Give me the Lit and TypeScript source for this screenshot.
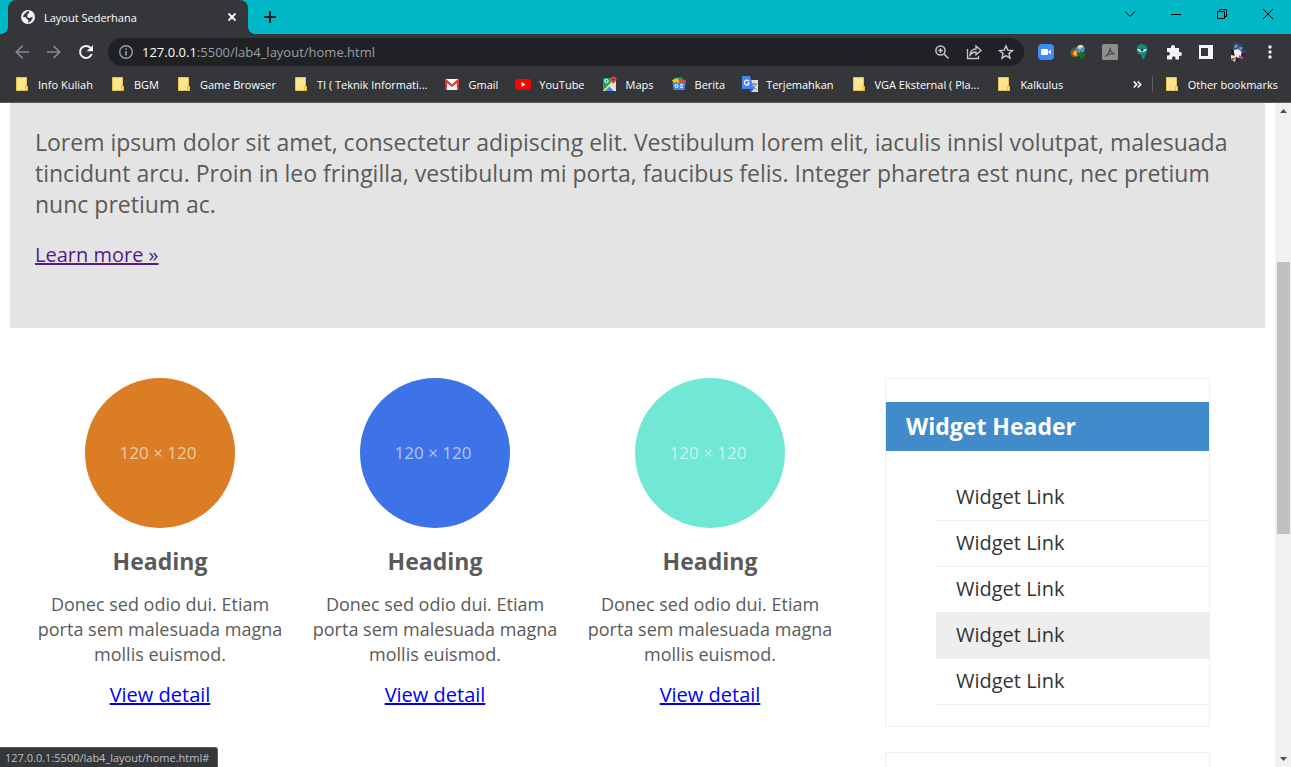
import { LitElement, html, css, svg } from "lit";
import { customElement } from "lit/decorators.js";

const folder = svg`<path d="M2.500 1.500h10v9h1v4h-11z" fill="#ffe591" stroke="#e8c14a"/><path d="M11.500 10.500h2v4h-2z" fill="#ffe591" stroke="#e8b931"/>`;
const gmail = svg`<path d="M1 3h14v11H1z" fill="#f2f2f2"/><path d="M1 14V3l7 6 7-6v11h-2V7L8 11 3 7v7z" fill="#d93a2f"/><path d="M2 3h12L8 8z" fill="#fff"/><path d="M1 3l7 6 7-6" fill="none" stroke="#e04a3f" stroke-width="1.500"/>`;
const youtube = svg`<rect x="0" y="3" width="16" height="11" rx="3" fill="#f00"/><path d="M6.500 6v5l4-2.500z" fill="#fff"/>`;
const maps = svg`<path d="M1 2h13v13H1z" fill="#1fa463"/><path d="M1 15L13 3l1 2v10z" fill="#f1f1f1"/><path d="M2 15l5-5 5 5z" fill="#4285f4"/><path d="M1 15L11 4l1 2-9 9z" fill="#fdd663"/><path d="M9 9l5 6V9z" fill="#dadce0"/><circle cx="4.500" cy="5" r="1.700" fill="none" stroke="#fff"/><path d="M11.500 9c0-3-3-3-3-5.500a3 3 0 0 1 6 0c0 2.500-3 2.500-3 5.500z" fill="#db4437"/><circle cx="11.500" cy="3.500" r="1" fill="#7b231b"/>`;
const news = svg`<path d="M3 2l8-1 1 5H3z" fill="#0f9d58"/><path d="M1 4l6-2 2 5-6 2z" fill="#fbbc04"/><path d="M9 3l6 1-1 6-6-2z" fill="#ea4335"/><path d="M1.500 6.500h13l-1 7.500h-11z" fill="#4285f4"/><circle cx="5.500" cy="10" r="1.500" fill="none" stroke="#fff"/><path d="M9 8.500h3M9 10h3M9 11.500h3" stroke="#fff" stroke-width=".8"/>`;
const translate = svg`<path d="M6 4h10v12H9z" fill="#dcdcdc"/><path d="M9 8h6M12 7v1M10 13c2-1 3-3 3.500-5M10.500 9.500c1 2 2 3 4 4" fill="none" stroke="#6b7a87"/><path d="M0 0h8l4 13H0z" fill="#4285f4"/><path d="M8 13h4l-3 3z" fill="#3050a8"/><path d="M7 5.300A2.500 2.500 0 1 0 7 8V7H5" fill="none" stroke="#fff" stroke-width="1.200"/>`;

const bookmarks = [
  { label: "Info Kuliah", icon: folder },
  { label: "BGM", icon: folder },
  { label: "Game Browser", icon: folder },
  { label: "TI ( Teknik Informati...", icon: folder },
  { label: "Gmail", icon: gmail },
  { label: "YouTube", icon: youtube },
  { label: "Maps", icon: maps },
  { label: "Berita", icon: news },
  { label: "Terjemahkan", icon: translate },
  { label: "VGA Eksternal ( Pla...", icon: folder },
  { label: "Kalkulus", icon: folder },
];

const extensions = [
  { name: "Zoom", art: svg`<rect width="16" height="16" rx="4" fill="#3f8cf7"/><rect x="3" y="5" width="7" height="6" rx="1" fill="#fff"/><path d="M10.500 7.500l2.500-2v5l-2.500-2z" fill="#fff"/>` },
  { name: "Download manager", art: svg`<path d="M6 3C2 4 0 7 0 9.500 1 13 5 14 8 13l-1-3z" fill="#1f7f2a"/><path d="M6 5C3 6 1 8 1 10c2 3 5 3 7 2z" fill="#e0301e"/><path d="M6 6C4 7 3 9 3 10c1 2 3 2 5 1z" fill="#f8c81e"/><circle cx="10.500" cy="5" r="4.300" fill="#5b8fd6"/><path d="M7.500 4c0-3 4-4 6-1.500L10 5z" fill="#d8e79a"/><path d="M5.500 9.500H10V7l6 3.500-5 4.500-1-2.500z" fill="#0b7d16"/>` },
  { name: "PDF", art: svg`<rect width="16" height="16" rx="1.500" fill="#8e8e8e"/><path d="M3 12.500c3-1.500 5-5 5-9 0 4 2 6 5 6.500-3-.8-7 0-10 2.500z" fill="none" stroke="#494949" stroke-width="1.200"/>` },
  { name: "Eye", art: svg`<path d="M8 0c4 0 6 3 5.500 6S11 11 10 15.500C8 15 7 13 7.500 11 4 11 2.500 8 2.700 5S5 0 8 0z" fill="#18877c"/><path d="M3 5c2 4 8 4 10 0-3 1-7 1-10 0z" fill="#fff"/><circle cx="8" cy="6" r="1.500" fill="#163b38"/>` },
  { name: "Extensions", art: svg`<path d="M1 4h4V3a2 2 0 0 1 4 0v1h4v4h1a2 2 0 0 1 0 4h-1v3.500H9.500V14a1.700 1.700 0 0 0-3.400 0v1.500H1V11.500h1.200a1.800 1.800 0 0 0 0-3.600H1z" fill="#f1f3f4"/>` },
  { name: "Side panel", art: svg`<path d="M1 1h14v14H1z" fill="#f1f3f4"/><path d="M3 4h7v8H3z" fill="#35363a"/>` },
  { name: "Profile", art: svg`<path d="M4 1l2-3 2 2c4-1 6 2 5 6l4 1-4 2-4 1-5-1-2-3z" fill="#344b75"/><path d="M6 0l2 3-4 1zM12 3L8 4l4 2z" fill="#78a8dc"/><path d="M4 6l4-1 3 2 1 4-4 3-4-3z" fill="#f4efeb"/><path d="M1 5l1 5 3 2-2-6zM11 10l4-1-3 4z" fill="#191d2d"/><path d="M1 11l5 1-1 6-4-3z" fill="#e9dfd4"/><path d="M9 11l4 2v2l-4-1z" fill="#e53492"/><path d="M1 14h3v2H2z" fill="#b45a49"/><path d="M4 13l2 1-2 2z" fill="#7cab35"/><path d="M7 14l2 2-3 2z" fill="#1c1d25"/>` },
];

const cards = ["orange", "blue", "mint"];

@customElement("app-root")
export class AppRoot extends LitElement {
  static styles = css`
    :host { display: flex; flex-direction: column; height: 100vh; overflow: hidden; position: relative; background: #fff; color: #5a5a5a; font-family: "Open Sans", sans-serif; font-size: 20px; }
    *, *::before, *::after { box-sizing: border-box; }
    button { padding: 0; border: 0; background: none; color: inherit; font: inherit; display: flex; align-items: center; justify-content: center; flex: none; }
    svg { display: block; flex: none; overflow: visible; }
    h2, h3, p, ul { margin: 0; padding: 0; }
    .tabs { height: 34px; flex: none; display: flex; background: #00b8c6; padding-left: 8px; color: #202124; }
    .tab { width: 240px; display: flex; align-items: center; gap: 8px; padding: 0 8px 0 12px; background: #35363a; color: #fff; border-radius: 8px 8px 0 0; font-size: 11px; position: relative; }
    .tab::before, .tab::after { content: ""; position: absolute; bottom: 0; width: 8px; height: 8px; }
    .tab::before { left: -8px; background: radial-gradient(circle at 0 0, transparent 8px, #35363a 8px); }
    .tab::after { right: -8px; background: radial-gradient(circle at 8px 0, transparent 8px, #35363a 8px); }
    .tab-title { flex: 1; }
    .tab-close { width: 16px; height: 16px; }
    .new-tab { width: 28px; margin-left: 8px; }
    .window { margin-left: auto; display: flex; color: #000; }
    .window button { width: 46px; height: 28px; }
    .toolbar { height: 36px; flex: none; display: flex; align-items: center; background: #35363a; padding: 0 13px 0 6px; color: #f1f3f4; }
    .nav { width: 32px; height: 32px; }
    .dim { color: #86888a; }
    .address { flex: 1; display: flex; align-items: center; height: 28px; margin: 0 14px 0 6px; padding: 0 10px; gap: 8px; border-radius: 14px; background: #202124; color: #9aa0a6; font-size: 13px; }
    .url { flex: 1; white-space: nowrap; }
    .host { color: #fff; }
    .address button { width: 16px; height: 16px; margin-left: 8px; color: #c6c8ca; }
    .extensions { display: flex; gap: 16px; }
    .extensions button, .more { width: 16px; height: 16px; }
    .more { margin-left: 16px; }
    .bookmarks { height: 33px; flex: none; display: flex; align-items: center; padding: 0 13px 4px 14px; background: #35363a; border-bottom: 1px solid #5b5c60; color: #fff; font-size: 11px; }
    .bookmark { display: flex; align-items: center; gap: 8px; color: inherit; text-decoration: none; white-space: nowrap; }
    .list { display: flex; gap: 17px; flex: 1; }
    .overflow { width: 16px; margin-right: 6px; }
    .rule { width: 1px; height: 16px; background: #5f6063; margin-right: 11px; }
    .viewport { flex: 1; min-height: 0; display: flex; }
    .page { flex: 1; min-width: 0; overflow: hidden; padding: 0 10px; }
    .hero { background: #e4e4e4; padding: 24px 25px 60px; margin-bottom: 50px; }
    .hero p { font-size: 23px; line-height: 31px; margin-bottom: 21px; }
    .hero a { display: inline-block; line-height: 27px; color: #551a8b; }
    .content { display: flex; align-items: flex-start; gap: 50px; padding: 0 55px 0 25px; }
    .cards { flex: 1; display: grid; grid-template-columns: repeat(3, 1fr); gap: 25px; text-align: center; }
    .card { display: flex; flex-direction: column; align-items: center; }
    .circle { width: 150px; height: 150px; border-radius: 50%; display: flex; align-items: center; justify-content: center; font-size: 17px; color: rgba(255, 255, 255, 0.6); padding: 0 4px 2px 0; }
    .orange { background: #db7d25; }
    .blue { background: #3e73e7; }
    .mint { background: #71e7d5; }
    h3 { font-size: 23px; line-height: 32px; }
    .card h3 { margin: 17px 0 15px; }
    .card p { font-size: 18px; line-height: 25px; margin-bottom: 14px; }
    .card a { color: #0000ee; line-height: 27px; }
    aside { width: 325px; flex: none; }
    .widget { border: 1px solid #eee; padding: 23px 0 21px; margin-bottom: 25px; }
    .widget h3 { background: #428bca; color: #fff; padding: 8px 20px 9px; margin-bottom: 24px; }
    .widget ul { list-style: none; padding-left: 50px; }
    .widget a { display: block; height: 46px; line-height: 44px; padding: 0 20px; border-bottom: 1px solid #eee; color: #333; text-decoration: none; }
    .widget .hovered { background: #eee; }
    .scrollbar { width: 16px; flex: none; display: flex; flex-direction: column; align-items: center; justify-content: space-between; background: #f1f1f1; color: #505050; padding-left: 1px; }
    .scrollbar button { height: 16px; width: 16px; }
    .track { flex: 1; width: 13px; display: flex; flex-direction: column; }
    .before { flex: 143; }
    .thumb { flex: 272; background: #c1c1c1; }
    .after { flex: 217; }
    .status { position: absolute; left: 0; bottom: 0; height: 20px; line-height: 20px; padding: 0 8px 0 5px; border-top: 1px solid #5b5c60; border-right: 1px solid #5b5c60; border-radius: 0 3px 0 0; background: #35363a; color: #bdc1c6; font-size: 11px; }
  `;

  render() {
    return html`
      <header class="tabs">
        <div class="tab">
          <svg width="16" height="16" viewBox="0 0 16 16"><circle cx="8" cy="8" r="7" fill="#f4f5f6"/><path d="M9 1.800C5 4 4 5 3 8l3 .2 1 2.300 1.500.5L8 14l3-2 2-4-3 .3L9 6 6.500 6.200 9 4z" fill="#35363a"/><path d="M8 5.500l3 .8.500 2-2 .7-2.500-1z" fill="#f4f5f6"/></svg>
          <span class="tab-title">Layout Sederhana</span>
          <button class="tab-close" aria-label="Close tab"><svg width="8" height="8" viewBox="0 0 8 8"><path d="M.5.5l7 7m0-7l-7 7" stroke="currentColor" stroke-width="1.800"/></svg></button>
        </div>
        <button class="new-tab" aria-label="New tab"><svg width="12" height="12" viewBox="0 0 12 12"><path d="M6 0v12M0 6h12" stroke="currentColor" stroke-width="2"/></svg></button>
        <div class="window">
          <button aria-label="Search tabs"><svg width="10" height="6" viewBox="0 0 10 6"><path d="M0 .5l5 5 5-5" fill="none" stroke="currentColor"/></svg></button>
          <button aria-label="Minimize"><svg width="10" height="2" viewBox="0 0 10 2"><path d="M0 1h10v1H0z" fill="currentColor"/></svg></button>
          <button aria-label="Restore"><svg width="10" height="10" viewBox="0 0 10 10"><path d="M.5 2.500h7v7h-7zM2.500 2.500v-2h7v7h-2" fill="none" stroke="currentColor"/></svg></button>
          <button aria-label="Close"><svg width="10" height="10" viewBox="0 0 10 10"><path d="M0 0l10 10M10 0L0 10" stroke="currentColor"/></svg></button>
        </div>
      </header>
      <nav class="toolbar">
        <button class="nav dim" aria-label="Back"><svg width="14" height="14" viewBox="0 0 14 14"><path d="M14 7H1.500M7.500.8L1.300 7l6.200 6.200" fill="none" stroke="currentColor" stroke-width="1.700"/></svg></button>
        <button class="nav dim" aria-label="Forward"><svg width="14" height="14" viewBox="0 0 14 14"><path d="M0 7h12.500M6.500.8L12.700 7l-6.200 6.200" fill="none" stroke="currentColor" stroke-width="1.700"/></svg></button>
        <button class="nav" aria-label="Reload"><svg width="14" height="14" viewBox="0 0 14 14"><path d="M12.700 9A6 6 0 1 1 11.500 2.900" fill="none" stroke="currentColor" stroke-width="2"/><path d="M14 0v6.300H7.700z" fill="currentColor"/></svg></button>
        <div class="address">
          <svg width="16" height="16" viewBox="0 0 16 16"><circle cx="8" cy="8" r="6.300" fill="none" stroke="currentColor" stroke-width="1.400"/><path d="M8 7v4.500M8 4.200v1.600" stroke="currentColor" stroke-width="1.600"/></svg>
          <span class="url"><span class="host">127.0.0.1</span>:5500/lab4_layout/home.html</span>
          <button aria-label="Zoom"><svg width="14" height="14" viewBox="0 0 14 14"><circle cx="5.500" cy="5.500" r="4.600" fill="none" stroke="currentColor" stroke-width="1.500"/><path d="M9 9l4.500 4.500M3.300 5.500h4.400M5.500 3.300v4.400" stroke="currentColor" stroke-width="1.500"/></svg></button>
          <button aria-label="Share"><svg width="16" height="16" viewBox="0 0 16 16"><path d="M1.500 5v9.500h11V12M4 11c.5-4 2.500-6 6-6V2l5 4.500-5 4.300V8C7.500 8 5.500 9 4 11z" fill="none" stroke="currentColor" stroke-width="1.300"/></svg></button>
          <button aria-label="Bookmark"><svg width="16" height="16" viewBox="0 0 16 16"><path d="M8 1.800l1.800 4.300 4.700.4-3.600 3.100 1.100 4.600L8 11.700l-4 2.500 1.100-4.600L1.500 6.500l4.700-.4z" fill="none" stroke="currentColor" stroke-width="1.400"/></svg></button>
        </div>
        <div class="extensions">
          ${extensions.map((e) => html`<button aria-label=${e.name}><svg width="16" height="16" viewBox="0 0 16 16">${e.art}</svg></button>`)}
        </div>
        <button class="more" aria-label="Menu"><svg width="4" height="14" viewBox="0 0 4 14"><g fill="currentColor"><circle cx="2" cy="2" r="1.700"/><circle cx="2" cy="7" r="1.700"/><circle cx="2" cy="12" r="1.700"/></g></svg></button>
      </nav>
      <nav class="bookmarks">
        <div class="list">
          ${bookmarks.map((b) => html`<a class="bookmark" href="#"><svg width="16" height="16" viewBox="0 0 16 16">${b.icon}</svg>${b.label}</a>`)}
        </div>
        <button class="overflow" aria-label="More bookmarks"><svg width="9" height="7" viewBox="0 0 9 7"><path d="M.7.500l3 3-3 3M4.700.500l3 3-3 3" fill="none" stroke="currentColor" stroke-width="1.600"/></svg></button>
        <span class="rule"></span>
        <a class="bookmark" href="#"><svg width="16" height="16" viewBox="0 0 16 16">${folder}</svg>Other bookmarks</a>
      </nav>
      <div class="viewport">
        <main class="page">
          <section class="hero">
            <p>Lorem ipsum dolor sit amet, consectetur adipiscing elit. Vestibulum lorem elit, iaculis innisl volutpat, malesuada tincidunt arcu. Proin in leo fringilla, vestibulum mi porta, faucibus felis. Integer pharetra est nunc, nec pretium nunc pretium ac.</p>
            <a href="#">Learn more »</a>
          </section>
          <div class="content">
            <section class="cards">
              ${cards.map((c) => html`<article class="card">
                <div class="circle ${c}">120 × 120</div>
                <h3>Heading</h3>
                <p>Donec sed odio dui. Etiam porta sem malesuada magna mollis euismod.</p>
                <a href="#">View detail</a>
              </article>`)}
            </section>
            <aside>
              <section class="widget">
                <h3>Widget Header</h3>
                <ul>
                  ${[0, 1, 2, 3, 4].map((i) => html`<li><a href="#" class=${i === 3 ? "hovered" : ""}>Widget Link</a></li>`)}
                </ul>
              </section>
              <section class="widget"></section>
            </aside>
          </div>
        </main>
        <div class="scrollbar">
          <button aria-label="Scroll up"><svg width="7" height="4" viewBox="0 0 7 4"><path d="M0 4h7L3.500 0z" fill="currentColor"/></svg></button>
          <div class="track"><div class="before"></div><div class="thumb"></div><div class="after"></div></div>
          <button aria-label="Scroll down"><svg width="7" height="4" viewBox="0 0 7 4"><path d="M0 0h7L3.500 4z" fill="currentColor"/></svg></button>
        </div>
      </div>
      <div class="status">127.0.0.1:5500/lab4_layout/home.html#</div>
    `;
  }
}
